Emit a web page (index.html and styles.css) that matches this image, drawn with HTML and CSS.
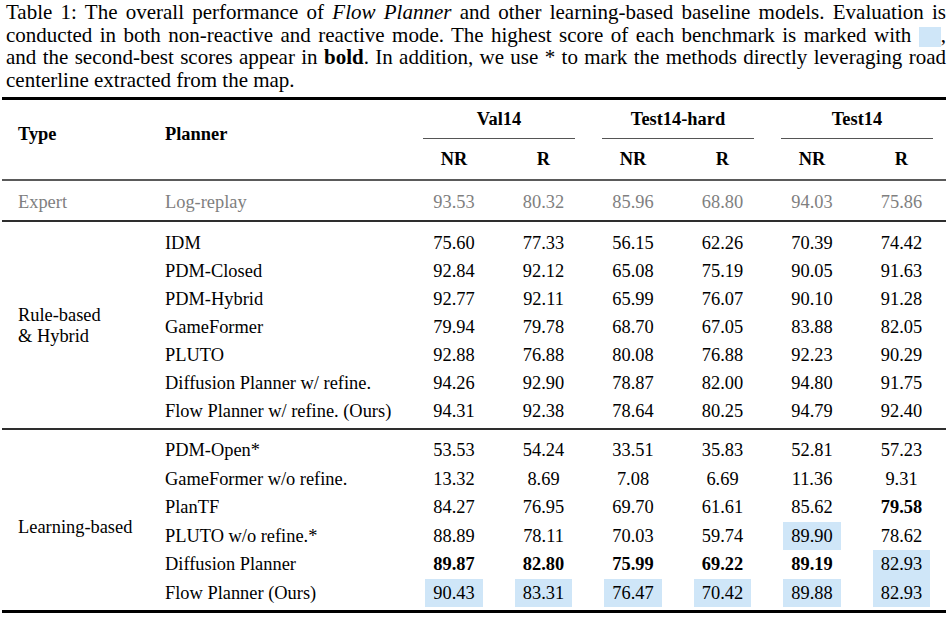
FILE: index.html
```html
<!DOCTYPE html>
<html>
<head>
<meta charset="utf-8">
<link rel="stylesheet" href="styles.css">
</head>
<body>
<div class="page">
  <div class="caption">
    <span class="ln j">Table 1: The overall performance of <i>Flow Planner</i> and other learning-based baseline models. Evaluation is</span>
    <span class="ln j">conducted in both non-reactive and reactive mode. The highest score of each benchmark is marked with <span class="swatch"></span>,</span>
    <span class="ln j">and the second-best scores appear in <b>bold</b>. In addition, we use * to mark the methods directly leveraging road</span>
    <span class="ln">centerline extracted from the map.</span>
  </div>
  <table class="results">
    <colgroup>
      <col class="c-type"><col class="c-planner">
      <col class="c-a"><col class="c-b"><col class="c-a"><col class="c-b"><col class="c-a"><col class="c-b">
    </colgroup>
    <tbody>
      <tr class="rule rule-top"><td colspan="8"></td></tr>
      <tr class="h1">
        <th rowspan="2" class="lab">Type</th>
        <th rowspan="2" class="name">Planner</th>
        <th colspan="2" class="grp-cell"><div class="grp">Val14</div></th>
        <th colspan="2" class="grp-cell"><div class="grp">Test14-hard</div></th>
        <th colspan="2" class="grp-cell"><div class="grp">Test14</div></th>
      </tr>
      <tr class="h2"><th>NR</th><th>R</th><th>NR</th><th>R</th><th>NR</th><th>R</th></tr>
      <tr class="rule rule-mid"><td colspan="8"></td></tr>
      <tr class="expert">
        <td class="lab">Expert</td><td class="name">Log-replay</td>
        <td>93.53</td><td>80.32</td><td>85.96</td><td>68.80</td><td>94.03</td><td>75.86</td>
      </tr>
      <tr class="rule rule-dark"><td colspan="8"></td></tr>
      <tr class="sp sp7"><td colspan="8"></td></tr>
      <tr class="g1">
        <td rowspan="7" class="lab lab-rule">Rule-based<br>&amp; Hybrid</td>
        <td class="name">IDM</td>
        <td>75.60</td><td>77.33</td><td>56.15</td><td>62.26</td><td>70.39</td><td>74.42</td>
      </tr>
      <tr class="g1"><td class="name">PDM-Closed</td>
        <td>92.84</td><td>92.12</td><td>65.08</td><td>75.19</td><td>90.05</td><td>91.63</td></tr>
      <tr class="g1"><td class="name">PDM-Hybrid</td>
        <td>92.77</td><td>92.11</td><td>65.99</td><td>76.07</td><td>90.10</td><td>91.28</td></tr>
      <tr class="g1"><td class="name">GameFormer</td>
        <td>79.94</td><td>79.78</td><td>68.70</td><td>67.05</td><td>83.88</td><td>82.05</td></tr>
      <tr class="g1"><td class="name">PLUTO</td>
        <td>92.88</td><td>76.88</td><td>80.08</td><td>76.88</td><td>92.23</td><td>90.29</td></tr>
      <tr class="g1"><td class="name">Diffusion Planner w/ refine.</td>
        <td>94.26</td><td>92.90</td><td>78.87</td><td>82.00</td><td>94.80</td><td>91.75</td></tr>
      <tr class="g1"><td class="name">Flow Planner w/ refine. (Ours)</td>
        <td>94.31</td><td>92.38</td><td>78.64</td><td>80.25</td><td>94.79</td><td>92.40</td></tr>
      <tr class="sp sp3"><td colspan="8"></td></tr>
      <tr class="rule rule-dark"><td colspan="8"></td></tr>
      <tr class="sp sp6"><td colspan="8"></td></tr>
      <tr class="g2">
        <td rowspan="6" class="lab lab-learn">Learning-based</td>
        <td class="name">PDM-Open*</td>
        <td>53.53</td><td>54.24</td><td>33.51</td><td>35.83</td><td>52.81</td><td>57.23</td>
      </tr>
      <tr class="g2"><td class="name">GameFormer w/o refine.</td>
        <td>13.32</td><td>8.69</td><td>7.08</td><td>6.69</td><td>11.36</td><td>9.31</td></tr>
      <tr class="g2"><td class="name">PlanTF</td>
        <td>84.27</td><td>76.95</td><td>69.70</td><td>61.61</td><td>85.62</td><td><b>79.58</b></td></tr>
      <tr class="g2"><td class="name">PLUTO w/o refine.*</td>
        <td>88.89</td><td>78.11</td><td>70.03</td><td>59.74</td><td><span class="best">89.90</span></td><td>78.62</td></tr>
      <tr class="g2"><td class="name">Diffusion Planner</td>
        <td><b>89.87</b></td><td><b>82.80</b></td><td><b>75.99</b></td><td><b>69.22</b></td><td><b>89.19</b></td><td><span class="best">82.93</span></td></tr>
      <tr class="g2"><td class="name">Flow Planner (Ours)</td>
        <td><span class="best">90.43</span></td><td><span class="best">83.31</span></td><td><span class="best">76.47</span></td><td><span class="best">70.42</span></td><td><span class="best">89.88</span></td><td><span class="best">82.93</span></td></tr>
      <tr class="sp sp3"><td colspan="8"></td></tr>
      <tr class="rule rule-bottom"><td colspan="8"></td></tr>
    </tbody>
  </table>
</div>
</body>
</html>
```

FILE: styles.css
```css
html, body {
  margin: 0;
  padding: 0;
  background: #ffffff;
}

body {
  color: #000000;
  font-family: "Liberation Serif", "Times New Roman", serif;
}

.page {
  width: 944px;
  padding: 0 6px 0 2px;
}

.caption {
  font-size: 21px;
  line-height: 22.5px;
  padding: 1px 0 0 4px;
}

.ln {
  display: block;
  white-space: nowrap;
}

.j {
  text-align: justify;
  text-align-last: justify;
  word-spacing: -3px;
}

.swatch {
  display: inline;
  font-size: 18px;
  line-height: 0;
  padding-left: 22px;
  background: #cfe6f8;
  vertical-align: -1px;
}

.results {
  width: 944px;
  margin-top: 6px;
  table-layout: fixed;
  border-collapse: separate;
  border-spacing: 0;
  font-size: 18.4px;
}

.c-type { width: 148px; }
.c-planner { width: 259px; }
.c-a { width: 90px; }
.c-b { width: 89px; }

.results td,
.results th {
  padding: 0;
  text-align: center;
  white-space: nowrap;
}

.results th {
  font-weight: bold;
}

.results .lab {
  text-align: left;
  padding-left: 16px;
}

.results .name {
  text-align: left;
  padding-left: 15px;
}

.rule td {
  height: 2px;
  font-size: 0;
  line-height: 0;
}

.rule-top td { background: #000000; height: 3px; }
.rule-mid td { background: #5a5a5a; }
.rule-dark td { background: #2e2e2e; }
.rule-bottom td { background: #000000; height: 3px; }

.sp td {
  font-size: 0;
  line-height: 0;
}
.sp3 td { height: 3px; }
.sp6 td { height: 6px; }
.sp7 td { height: 7px; }

.results .h1 th.lab,
.results .h1 th.name {
  vertical-align: top;
  line-height: 28px;
  padding-top: 20px;
}

.grp-cell {
  vertical-align: top;
}

.grp {
  margin: 0 13px 0 14px;
  line-height: 38px;
  border-bottom: 1px solid #555555;
}

.h2 th {
  line-height: 40px;
}

.results .expert td {
  color: #7f7f7f;
  line-height: 36px;
  padding-top: 3px;
}

.g1 td {
  line-height: 28px;
}

.g2 td {
  line-height: 28.5px;
}

.results .lab-rule {
  vertical-align: top;
  line-height: 21px;
  padding-top: 76px;
}

.results .lab-learn {
  vertical-align: top;
  padding-top: 77px;
}

.best {
  display: inline-block;
  padding: 0 8.3px;
  background: #cfe6f8;
}
```
